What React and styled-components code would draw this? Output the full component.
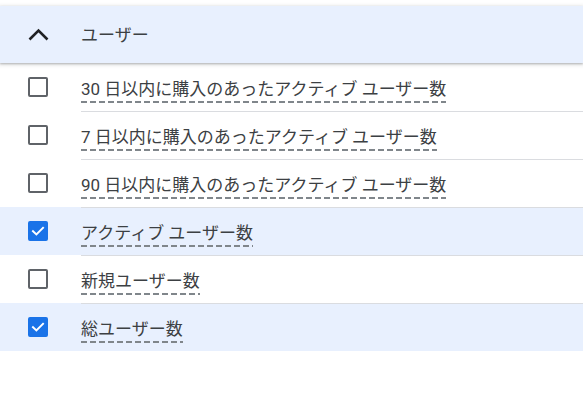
import React from "react";
import styled, { createGlobalStyle } from "styled-components";

const Global = createGlobalStyle`
  html, body { margin: 0; padding: 0; background: #fff; }
  body { font-family: Roboto, "Noto Sans CJK JP", sans-serif; }
`;

const Page = styled.div`
  width: 583px;
  height: 402px;
  padding-top: 6px;
  box-sizing: border-box;
  overflow: hidden;
  background: #fff;
`;

const Header = styled.div`
  height: 57px;
  display: flex;
  align-items: center;
  background: #e8f0fe;
  box-shadow: 0 1px 2px rgba(60, 64, 67, 0.3), 0 1px 4px 1px rgba(60, 64, 67, 0.15);
  position: relative;
  z-index: 1;
`;

const IconCell = styled.div`
  width: 81px;
  flex: none;
  display: flex;
  align-items: center;
  padding-left: 28px;
  box-sizing: border-box;
`;

const Title = styled.span`
  font-size: 17px;
  letter-spacing: 0;
  color: #3c4043;
  line-height: 24px;
`;

const List = styled.div`
  display: flex;
  flex-direction: column;
`;

const Row = styled.div`
  height: 48px;
  display: flex;
  align-items: center;
  position: relative;
  background: ${(p) => (p.$selected ? "#e8f0fe" : "transparent")};
  &::before {
    content: "";
    display: ${(p) => (p.$first ? "none" : "block")};
    position: absolute;
    top: 0;
    left: 81px;
    right: 0;
    height: 1px;
    background: #dadce0;
  }
`;

const Box = styled.span`
  width: 20px;
  height: 20px;
  box-sizing: border-box;
  border-radius: 2px;
  border: 2px solid ${(p) => (p.$checked ? "#1a73e8" : "#5f6368")};
  background: ${(p) => (p.$checked ? "#1a73e8" : "transparent")};
  display: flex;
  align-items: center;
  justify-content: center;
`;

const Label = styled.span`
  display: inline-block;
  margin-top: 6px;
  font-size: 17px;
  letter-spacing: 0;
  line-height: 24px;
  color: #3c4043;
  padding-bottom: 2px;
  background-image: linear-gradient(to right, #80868b 6px, transparent 6px);
  background-size: 9px 2px;
  background-repeat: repeat-x;
  background-position: left bottom;
  white-space: nowrap;
`;

const items = [
  { label: "30 日以内に購入のあったアクティブ ユーザー数", checked: false },
  { label: "7 日以内に購入のあったアクティブ ユーザー数", checked: false },
  { label: "90 日以内に購入のあったアクティブ ユーザー数", checked: false },
  { label: "アクティブ ユーザー数", checked: true },
  { label: "新規ユーザー数", checked: false },
  { label: "総ユーザー数", checked: true },
];

function Check() {
  return (
    <svg width="14" height="14" viewBox="0 0 14 14">
      <polyline
        points="2,7.2 5.4,10.4 12,3.8"
        fill="none"
        stroke="#fff"
        strokeWidth="2"
        strokeLinecap="square"
      />
    </svg>
  );
}

export default function App() {
  return (
    <Page>
      <Global />
      <Header>
        <IconCell>
          <svg width="22" height="14" viewBox="0 0 22 14">
            <polyline
              points="1.5,11.5 10.5,2.5 19.5,11.5"
              fill="none"
              stroke="#202124"
              strokeWidth="2.6"
            />
          </svg>
        </IconCell>
        <Title>ユーザー</Title>
      </Header>
      <List>
        {items.map((it, i) => (
          <Row key={i} $first={i === 0} $selected={it.checked}>
            <IconCell>
              <Box $checked={it.checked}>{it.checked && <Check />}</Box>
            </IconCell>
            <Label>{it.label}</Label>
          </Row>
        ))}
      </List>
    </Page>
  );
}
